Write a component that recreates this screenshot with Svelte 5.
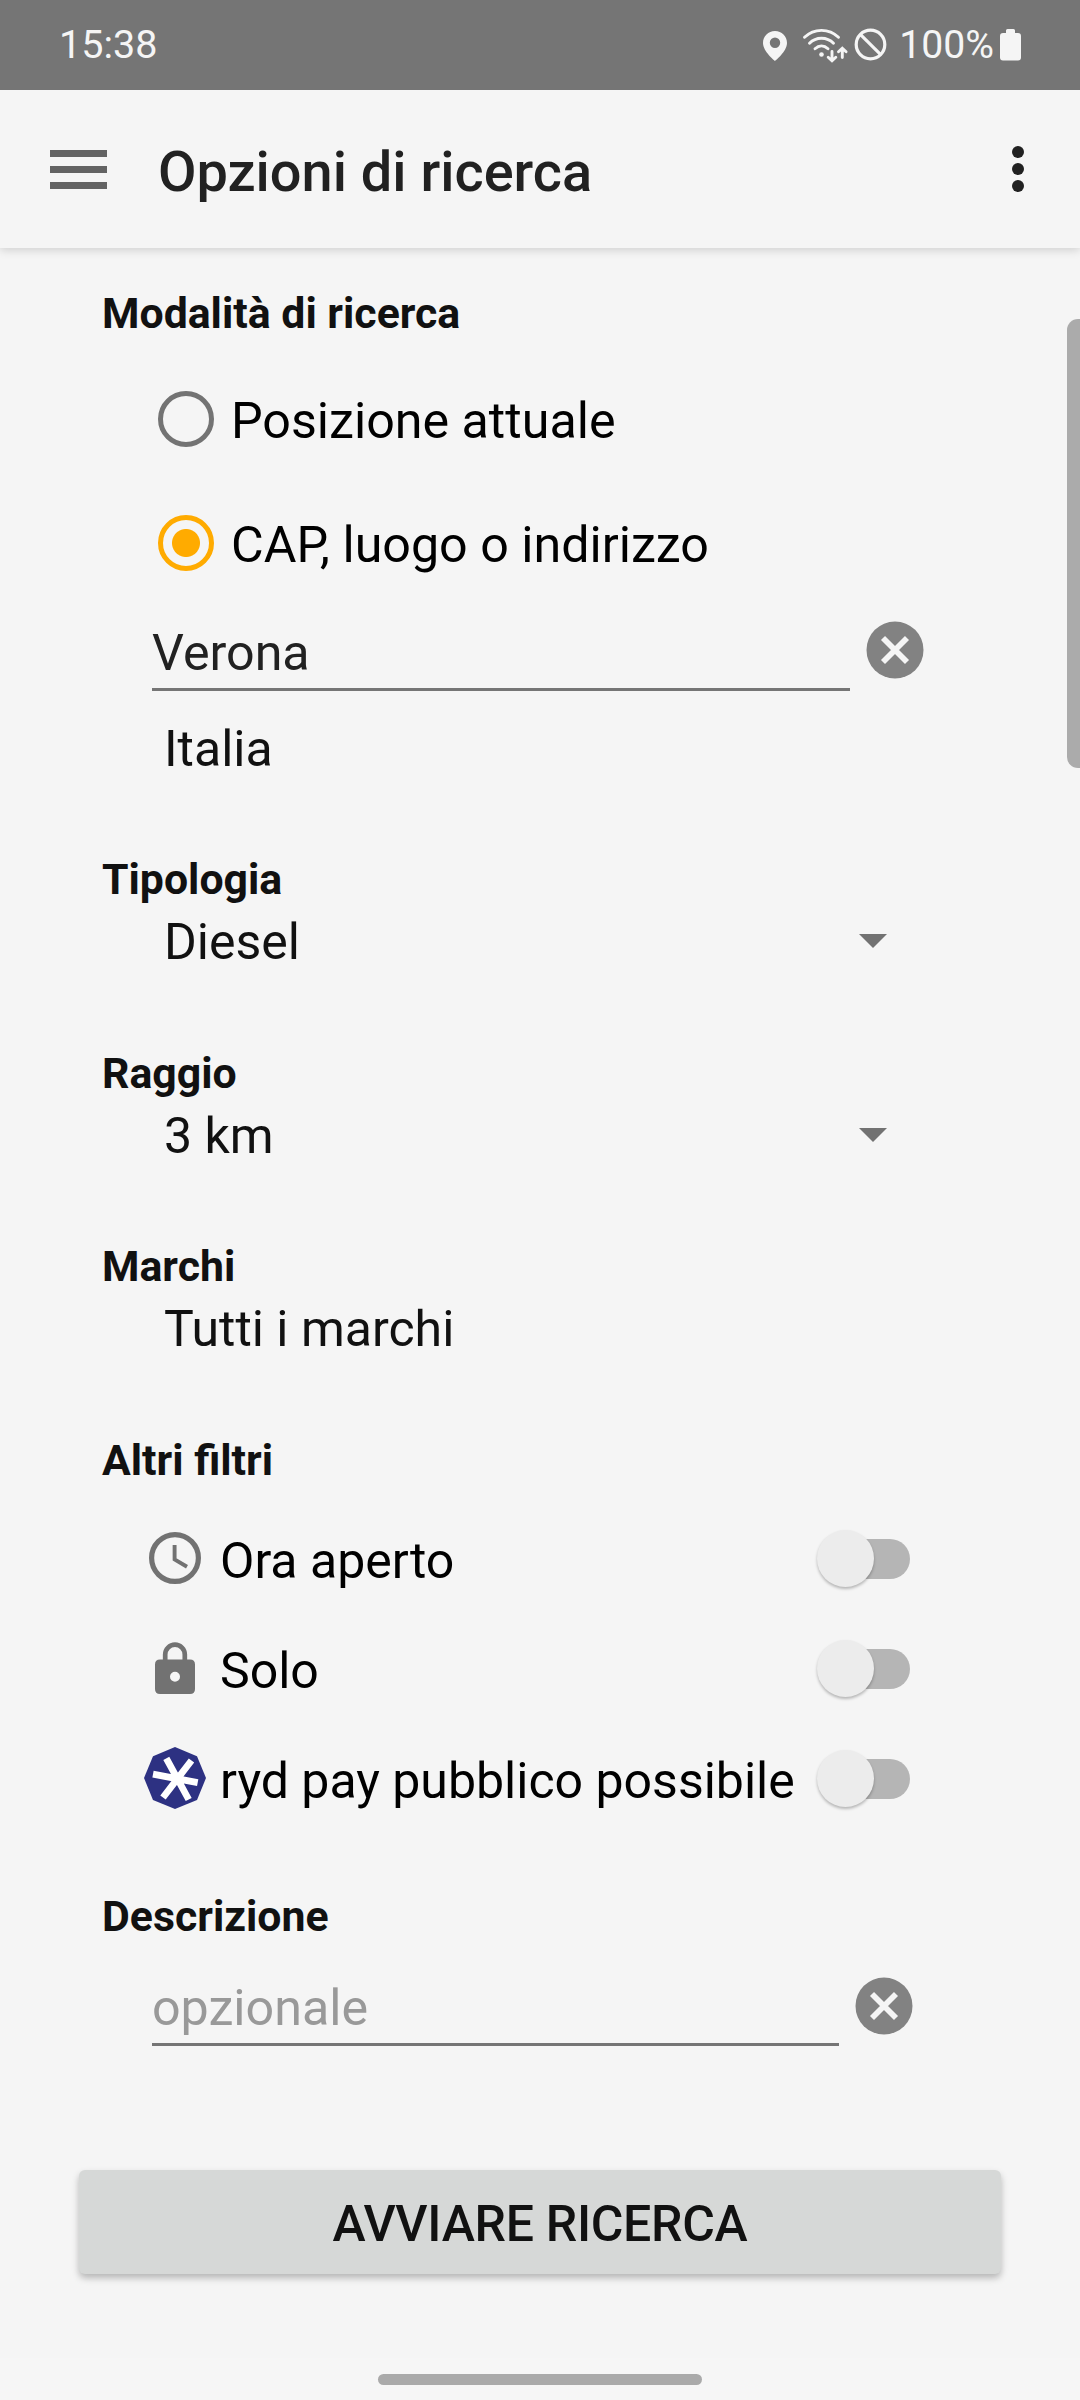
<script lang="ts">
  let mode = $state("address");
  let place = $state("Verona");
  let note = $state("");

  const modes = [
    { id: "position", label: "Posizione attuale" },
    { id: "address", label: "CAP, luogo o indirizzo" },
  ];

  const selects = [
    { title: "Tipologia", value: "Diesel", arrow: true },
    { title: "Raggio", value: "3 km", arrow: true },
    { title: "Marchi", value: "Tutti i marchi", arrow: false },
  ];

  let filters = $state([
    { icon: "clock", label: "Ora aperto", on: false },
    { icon: "lock", label: "Solo", on: false },
    { icon: "ryd", label: "ryd pay pubblico possibile", on: false },
  ]);
</script>

{#snippet clearIcon()}
  <svg width="58" height="58" viewBox="0 0 58 58">
    <circle cx="29" cy="29" r="28.5" fill="#828282" />
    <path d="M17 17L41 41M41 17L17 41" stroke="#f5f5f5" stroke-width="5.7" />
  </svg>
{/snippet}

<div class="screen">
  <div class="status">
    <span class="time">15:38</span>
    <!-- location, wifi, do not disturb -->
    <svg class="status-icons" width="126" height="44" viewBox="762 22 126 44">
      <path
        d="M775 30c-6.700 0-12 5.300-12 12 0 8.500 12 18 12 18s12-9.500 12-18c0-6.700-5.300-12-12-12zm0 17a5.200 5.200 0 1 1 0-10.400a5.200 5.200 0 0 1 0 10.400z"
        fill="#f5f5f5"
      />
      <g fill="none" stroke="#f5f5f5" stroke-width="2.900" stroke-linecap="round">
        <path d="M804.500 36.300C814 27 829 27 838.500 36.300" />
        <path d="M809.500 42.300C816 35.500 827 35.500 833.500 42.300" />
        <path d="M815 47.800C819 44 824 44 828 47.800" />
        <path d="M832 50.500V59.500M828.200 56.200L832 59.800L835.800 56.200" />
        <path d="M842.300 56.500V47.500M838.500 50.800L842.300 47.200L846.100 50.800" />
      </g>
      <circle cx="821.500" cy="53.500" r="2.300" fill="#f5f5f5" />
      <g fill="none" stroke="#f5f5f5" stroke-width="3.200">
        <circle cx="870.500" cy="43.500" r="14.300" />
        <path d="M860.300 33.300L880.700 53.700" />
      </g>
    </svg>
    <span class="percent">100%</span>
    <svg width="22" height="32" viewBox="0 0 22 32">
      <path
        d="M6 4V1.500Q6 0 7.500 0H13.500Q15 0 15 1.500V4H18Q21 4 21 7V28.500Q21 31.500 18 31.500H3Q0 31.500 0 28.500V7Q0 4 3 4Z"
        fill="#f5f5f5"
      />
    </svg>
  </div>

  <header class="toolbar">
    <button class="menu" aria-label="Menu">
      <span></span>
      <span></span>
      <span></span>
    </button>
    <h1>Opzioni di ricerca</h1>
    <button class="more" aria-label="Altro">
      <span></span>
      <span></span>
      <span></span>
    </button>
  </header>

  <main>
    <section class="mode">
      <h2>Modalità di ricerca</h2>
      {#each modes as m}
        <button class="radio" onclick={() => (mode = m.id)}>
          <span class="ring" class:checked={mode === m.id}></span>
          <span class="label">{m.label}</span>
        </button>
      {/each}
      <div class="field">
        <input type="text" bind:value={place} />
        <button aria-label="Cancella" onclick={() => (place = "")}>
          {@render clearIcon()}
        </button>
      </div>
      <div class="country">Italia</div>
    </section>

    {#each selects as s}
      <section class="select">
        <h2>{s.title}</h2>
        <div class="value">
          <span>{s.value}</span>
          {#if s.arrow}
            <svg width="28" height="14" viewBox="0 0 28 14">
              <path d="M0 0H28L14 14Z" fill="#727272" />
            </svg>
          {/if}
        </div>
      </section>
    {/each}

    <section class="filters">
      <h2>Altri filtri</h2>
      {#each filters as f}
        <div class="filter">
          <svg width="62" height="62" viewBox="0 0 62 62">
            {#if f.icon === "clock"}
              <circle cx="31" cy="31" r="23.400" fill="none" stroke="#727272" stroke-width="5.200" />
              <path d="M30.600 18V32.500L43 39.700" fill="none" stroke="#727272" stroke-width="3.900" />
            {:else if f.icon === "lock"}
              <path
                d="M21.200 24V17.500a9.800 9.800 0 0 1 19.600 0V24"
                fill="none"
                stroke="#727272"
                stroke-width="4.700"
              />
              <path
                fill-rule="evenodd"
                d="M16 22.500H46Q51 22.500 51 27.500V52Q51 57 46 57H16Q11 57 11 52V27.500Q11 22.500 16 22.500ZM31 34.700a5 5 0 1 0 0 10a5 5 0 0 0 0-10Z"
                fill="#727272"
              />
            {:else}
              <path
                d="M31 0L53 9.200L62 31L53 53L31 62L9 53L0 31L9 9.200Z"
                fill="#2d3182"
              />
              <path
                d="M22.300 11.300L44.700 52.500M47.500 13.500L19 50.500M9 27.200L53.700 35.700"
                stroke="#fff"
                stroke-width="6.800"
              />
            {/if}
          </svg>
          <span class="label">{f.label}</span>
          <button
            class="switch"
            class:on={f.on}
            aria-label={f.label}
            onclick={() => (f.on = !f.on)}
          >
            <span class="thumb"></span>
          </button>
        </div>
      {/each}
    </section>

    <section class="note">
      <h2>Descrizione</h2>
      <div class="field">
        <input type="text" placeholder="opzionale" bind:value={note} />
        <button aria-label="Cancella" onclick={() => (note = "")}>
          {@render clearIcon()}
        </button>
      </div>
    </section>

    <button class="submit">AVVIARE RICERCA</button>

    <div class="scrollbar"></div>
  </main>

  <div class="nav"><span></span></div>
</div>

<style>
  :global(body) {
    background: #f5f5f5;
  }

  .screen {
    display: flex;
    flex-direction: column;
    width: 1080px;
    height: 2400px;
    overflow: hidden;
    background: #f5f5f5;
    color: #111;
    font-family: Roboto, "Noto Sans", sans-serif;
    font-size: 50px;
  }

  button {
    flex: none;
    padding: 0;
    border: none;
    background: none;
    color: inherit;
    font: inherit;
    text-align: left;
    cursor: pointer;
  }

  svg {
    display: block;
    flex: none;
  }

  h1,
  h2 {
    margin: 0;
  }

  /* --- status bar --- */

  .status {
    display: flex;
    align-items: center;
    flex: none;
    box-sizing: border-box;
    height: 90px;
    padding: 0 58px 0 59px;
    background: #757575;
    color: #f5f5f5;
    font-size: 39.5px;
  }

  .time {
    flex: 1;
    margin-top: -1px;
  }

  .status-icons {
    margin-right: 11px;
  }

  .percent {
    margin: -1px 6px 0 0;
    font-size: 39.2px;
  }

  /* --- toolbar --- */

  .toolbar {
    display: flex;
    align-items: center;
    flex: none;
    box-sizing: border-box;
    position: relative;
    height: 158px;
    padding: 0 56px 0 50px;
    background: #f5f5f5;
    box-shadow: 0 2px 9px rgba(0, 0, 0, 0.16);
    clip-path: inset(0 0 -20px 0);
  }

  .menu {
    display: flex;
    flex-direction: column;
    gap: 9px;
    width: 57px;
  }

  .menu span {
    height: 7px;
    background: #636363;
  }

  h1 {
    flex: 1;
    padding: 5px 0 0 51px;
    font-size: 55.9px;
    font-weight: 500;
    line-height: 66px;
    color: #212121;
  }

  .more {
    display: flex;
    flex-direction: column;
    gap: 5px;
  }

  .more span {
    width: 12px;
    height: 12px;
    border-radius: 50%;
    background: #212121;
  }

  /* --- form --- */

  main {
    position: relative;
    flex: 1;
    padding: 41px 79px 0 102px;
  }

  h2 {
    padding-bottom: 2px;
    font-size: 42.8px;
    font-weight: 700;
    line-height: 48px;
  }

  .mode {
    height: 566px;
  }

  .radio {
    display: flex;
    align-items: center;
    height: 124px;
    padding-left: 56px;
    font-size: 50.2px;
    color: #000;
  }

  h2 + .radio {
    margin-top: 18px;
  }

  .ring {
    box-sizing: border-box;
    width: 56px;
    height: 56px;
    margin-right: 17px;
    border: 5.6px solid #737373;
    border-radius: 50%;
  }

  .ring.checked {
    border-color: #ffab00;
    background: radial-gradient(circle, #ffab00 13.5px, transparent 14.5px);
  }

  .label {
    padding-top: 3px;
    line-height: 60px;
    color: #000;
  }

  .field {
    display: flex;
    padding-left: 50px;
  }

  .field input {
    box-sizing: border-box;
    width: 698px;
    height: 76px;
    padding: 1px 0 0;
    border: none;
    border-bottom: 3px solid #757575;
    border-radius: 0;
    outline: none;
    background: none;
    color: #212121;
    font: inherit;
    font-size: 50.2px;
  }

  .field input::placeholder {
    color: #999;
    opacity: 1;
  }

  .field button {
    height: 58px;
    margin: 7px 0 0 16px;
  }

  .mode .field {
    padding-top: 10px;
  }

  .mode .field button {
    margin-top: 6px;
  }

  .country {
    padding: 28px 0 0 62px;
    line-height: 60px;
  }

  .select {
    height: 193.6px;
  }

  .value {
    display: flex;
    align-items: center;
    justify-content: space-between;
    width: 723px;
    height: 74px;
    padding-left: 62px;
  }

  .value svg {
    margin-top: -2px;
  }

  .filter {
    display: flex;
    align-items: center;
    width: 808px;
    height: 110px;
    padding-left: 42px;
    box-sizing: border-box;
  }

  h2 + .filter {
    margin-top: 18px;
  }

  .filter > svg {
    margin: -2px 14px 0 0;
  }

  .filter .label {
    flex: 1;
    padding-top: 5px;
    white-space: nowrap;
  }

  .switch {
    width: 86px;
    height: 40px;
    border-radius: 20px;
    background: #b5b5b5;
  }

  .thumb {
    display: block;
    width: 57px;
    height: 57px;
    margin: -9px 0 0 -7px;
    border-radius: 50%;
    background: #ececec;
    box-shadow: 0 2px 3px rgba(0, 0, 0, 0.26);
  }

  .switch.on {
    background: #ffd580;
  }

  .switch.on .thumb {
    margin-left: 36px;
    background: #ffab00;
  }

  .note {
    margin-top: 58px;
  }

  .note .field {
    padding-top: 28px;
  }

  .note .field input {
    width: 687px;
    padding-top: 2px;
  }

  .submit {
    display: block;
    width: 922px;
    height: 104px;
    margin: 124px 0 0 -23px;
    padding-top: 4px;
    border-radius: 6px;
    background: #d6d8d7;
    box-shadow: 0 4px 7px rgba(0, 0, 0, 0.26);
    font-weight: 500;
    letter-spacing: -0.3px;
    text-align: center;
  }

  /* floats over the right edge of the form */
  .scrollbar {
    position: absolute;
    top: 71px;
    right: 0;
    width: 13px;
    height: 449px;
    border-radius: 11px 0 0 11px;
    background: #ababab;
  }

  .nav {
    display: flex;
    align-items: center;
    justify-content: center;
    flex: none;
    height: 42px;
    background: #f6f6f6;
  }

  .nav span {
    width: 324px;
    height: 11px;
    border-radius: 6px;
    background: #aaa;
  }
</style>
